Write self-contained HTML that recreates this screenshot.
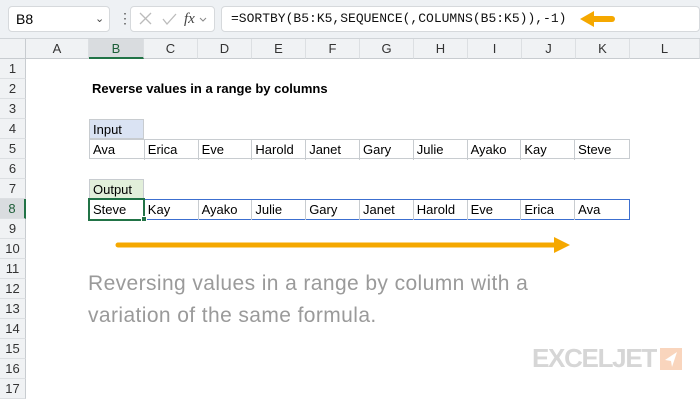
<!DOCTYPE html>
<html><head><style>
*{margin:0;padding:0;box-sizing:border-box}
body{width:700px;height:400px;background:#fff;font-family:"Liberation Sans",sans-serif;position:relative;overflow:hidden}
.a{position:absolute}
.top{left:0;top:0;width:700px;height:39px;background:#eef1f4;border-bottom:1px solid #d0d4d8}
.box{background:#fff;border:1px solid #d6d9dc;border-radius:4px}
.hdr{top:39px;height:20px;background:#f0f2f4;border-bottom:1px solid #c8ccd0;border-right:1px solid #dcdfe2;font-size:13px;color:#333;text-align:center;line-height:20px}
.rh{left:0;width:26px;height:20px;background:#f0f2f4;border-right:1px solid #c8ccd0;border-bottom:1px solid #dcdfe2;font-size:13px;color:#333;text-align:center;line-height:20px}
.c{height:20px;font-size:13px;line-height:19px;padding-left:3px;color:#000}
</style></head><body>
<div class="a top"></div>
<div class="a box" style="left:8px;top:6px;width:102px;height:26px;font-size:14px;line-height:24px;padding-left:7px">B8<span class="a" style="left:86px;top:0;font-size:11px;color:#444">&#8964;</span></div>
<div class="a" style="left:118px;top:10px;font-size:14px;color:#555">&#8942;</div>
<div class="a box" style="left:130px;top:6px;width:85px;height:26px"></div>
<svg class="a" style="left:136px;top:10px" width="75" height="18"><path d="M4 3l11 11M15 3L4 14" stroke="#bbb" stroke-width="1.3" fill="none"/><path d="M27 9l4 5 9-10" stroke="#bbb" stroke-width="1.3" fill="none"/><text x="48" y="13" font-family="Liberation Serif" font-style="italic" font-size="15" fill="#444">fx</text><path d="M64 8l3 3 3-3" stroke="#888" fill="none"/></svg>
<div class="a box" style="left:221px;top:6px;width:479px;height:26px;font-family:'Liberation Mono',monospace;font-size:13px;line-height:24px;padding-left:9px;color:#111">=SORTBY(B5:K5,SEQUENCE(,COLUMNS(B5:K5)),-1)</div>
<svg class="a" style="left:578px;top:10px" width="40" height="18"><path d="M14 9h20" stroke="#f5a800" stroke-width="6" stroke-linecap="round"/><path d="M2 9l14-8v16z" fill="#f5a800"/></svg>
<div class="a" style="left:0;top:39px;width:26px;height:20px;background:#f0f2f4;border-right:1px solid #c8ccd0;border-bottom:1px solid #c8ccd0"></div>
<div class="a hdr" style="left:26px;width:63px">A</div>
<div class="a hdr" style="left:89px;width:55px;background:#d9dcdf;border-bottom:2px solid #217346;color:#1d5e38">B</div>
<div class="a hdr" style="left:144px;width:54px">C</div>
<div class="a hdr" style="left:198px;width:54px">D</div>
<div class="a hdr" style="left:252px;width:54px">E</div>
<div class="a hdr" style="left:306px;width:54px">F</div>
<div class="a hdr" style="left:360px;width:54px">G</div>
<div class="a hdr" style="left:414px;width:54px">H</div>
<div class="a hdr" style="left:468px;width:54px">I</div>
<div class="a hdr" style="left:522px;width:54px">J</div>
<div class="a hdr" style="left:576px;width:54px">K</div>
<div class="a hdr" style="left:630px;width:70px">L</div>
<div class="a rh" style="top:59px">1</div><div class="a rh" style="top:79px">2</div><div class="a rh" style="top:99px">3</div><div class="a rh" style="top:119px">4</div><div class="a rh" style="top:139px">5</div><div class="a rh" style="top:159px">6</div><div class="a rh" style="top:179px">7</div>
<div class="a rh" style="top:199px;background:#d9dcdf;border-right:2px solid #217346;color:#1d5e38">8</div>
<div class="a rh" style="top:219px">9</div><div class="a rh" style="top:239px">10</div><div class="a rh" style="top:259px">11</div><div class="a rh" style="top:279px">12</div><div class="a rh" style="top:299px">13</div><div class="a rh" style="top:319px">14</div><div class="a rh" style="top:339px">15</div><div class="a rh" style="top:359px">16</div><div class="a rh" style="top:379px">17</div>
<div class="a c" style="left:89px;top:79px;font-weight:bold;line-height:20px">Reverse values in a range by columns</div>
<div class="a c" style="left:89px;top:119px;width:55px;background:#dae3f3;border:1px solid #c8ccd0">Input</div>
<div class="a" style="left:89px;top:139px;width:541px;height:20px;border:1px solid #c8ccd0;display:flex">
<div class="c" style="width:55px;border-right:1px solid #c8ccd0">Ava</div><div class="c" style="width:54px;border-right:1px solid #c8ccd0">Erica</div><div class="c" style="width:54px;border-right:1px solid #c8ccd0">Eve</div><div class="c" style="width:54px;border-right:1px solid #c8ccd0">Harold</div><div class="c" style="width:54px;border-right:1px solid #c8ccd0">Janet</div><div class="c" style="width:54px;border-right:1px solid #c8ccd0">Gary</div><div class="c" style="width:54px;border-right:1px solid #c8ccd0">Julie</div><div class="c" style="width:54px;border-right:1px solid #c8ccd0">Ayako</div><div class="c" style="width:54px;border-right:1px solid #c8ccd0">Kay</div><div class="c" style="width:54px">Steve</div></div>
<div class="a c" style="left:89px;top:179px;width:55px;background:#e2efda;border:1px solid #c8ccd0">Output</div>
<div class="a" style="left:89px;top:199px;width:541px;height:21px;border:1px solid #3c6fd0;display:flex">
<div class="c" style="width:55px;border-right:1px solid #c8ccd0">Steve</div><div class="c" style="width:54px;border-right:1px solid #c8ccd0">Kay</div><div class="c" style="width:54px;border-right:1px solid #c8ccd0">Ayako</div><div class="c" style="width:54px;border-right:1px solid #c8ccd0">Julie</div><div class="c" style="width:54px;border-right:1px solid #c8ccd0">Gary</div><div class="c" style="width:54px;border-right:1px solid #c8ccd0">Janet</div><div class="c" style="width:54px;border-right:1px solid #c8ccd0">Harold</div><div class="c" style="width:54px;border-right:1px solid #c8ccd0">Eve</div><div class="c" style="width:54px;border-right:1px solid #c8ccd0">Erica</div><div class="c" style="width:54px">Ava</div></div>
<div class="a" style="left:88px;top:198px;width:57px;height:23px;border:2px solid #217346"></div>
<div class="a" style="left:141px;top:216px;width:6px;height:6px;background:#217346;border:1px solid #fff"></div>
<svg class="a" style="left:110px;top:235px" width="470" height="20"><path d="M8 10h440" stroke="#f5a800" stroke-width="5" stroke-linecap="round"/><path d="M460 10l-16-8v16z" fill="#f5a800"/></svg>
<div class="a" style="left:88px;top:268px;font-size:21px;color:#9a9a9a;line-height:32px;letter-spacing:0.4px">Reversing values in a range by column with a<br>variation of the same formula.</div>
<div class="a" style="left:532px;top:343px;font-size:26px;font-weight:bold;color:#d6d6d6;letter-spacing:-1.3px">EXCELJET</div>
<svg class="a" style="left:660px;top:348px" width="22" height="22"><rect width="22" height="22" fill="#f9d5bd"/><path d="M17 4L5 12l6 1 1 6z" fill="#fff"/></svg>
</body></html>
